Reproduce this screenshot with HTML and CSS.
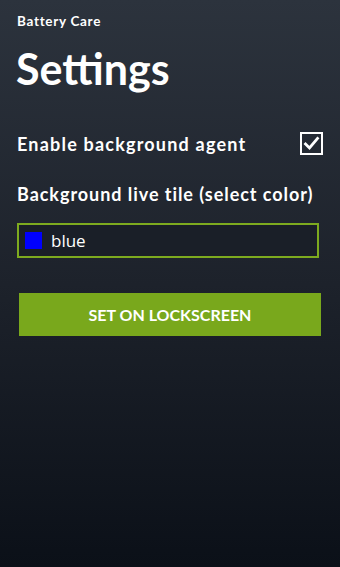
FILE: index.html
```html
<!DOCTYPE html>
<html>
<head>
<meta charset="utf-8">
<link rel="stylesheet" href="styles.css">
</head>
<body>
<div class="page">
  <div class="app-title">Battery Care</div>
  <h1 class="page-title">Settings</h1>
  <div class="row">
    <span class="label">Enable background agent</span>
    <span class="checkbox">
      <svg width="19" height="19" viewBox="0 0 19 19"><path d="M3.5 10 L7.5 14 L15.5 4.5" fill="none" stroke="#fff" stroke-width="2.8" stroke-linecap="square"/></svg>
    </span>
  </div>
  <div class="label label-color">Background live tile (select color)</div>
  <div class="picker">
    <span class="swatch"></span>
    <span class="picker-text">blue</span>
  </div>
  <button class="btn">SET ON LOCKSCREEN</button>
</div>
</body>
</html>
```
FILE: styles.css
```css
html, body {
  margin: 0;
  padding: 0;
  height: 100%;
}
body {
  background: linear-gradient(to bottom, #2c333d 0%, #1d222b 50%, #0b1018 100%);
  font-family: "Lato", "DejaVu Sans", sans-serif;
  color: #fff;
}
.page {
  padding: 12px 19px 0 17px;
  display: flex;
  flex-direction: column;
}
.app-title {
  font-size: 13.5px;
  font-weight: 700;
  line-height: 18px;
  letter-spacing: 0.7px;
}
.page-title {
  margin: 14px 0 0 -1px;
  font-size: 43px;
  font-weight: 700;
  line-height: 50px;
}
.row {
  margin-top: 38px;
  display: flex;
  align-items: center;
  justify-content: space-between;
}
.label {
  font-size: 18px;
  font-weight: 700;
  line-height: 22px;
  letter-spacing: 1.2px;
  white-space: nowrap;
}
.checkbox {
  width: 19px;
  height: 19px;
  border: 2px solid #fff;
  display: flex;
  align-items: center;
  justify-content: center;
  margin-right: -2px;
}
.label-color {
  margin-top: 28px;
  letter-spacing: 0.95px;
}
.picker {
  margin-top: 18px;
  margin-right: 2px;
  height: 31px;
  border: 2px solid #7daa1f;
  background: #1a1f28;
  display: flex;
  align-items: center;
  padding-left: 6px;
}
.swatch {
  width: 17px;
  height: 17px;
  background: #0000ff;
}
.picker-text {
  margin-left: 9px;
  font-family: "Open Sans", sans-serif;
  font-size: 17px;
  color: #fff;
}
.btn {
  margin: 35px 0 0 2px;
  height: 43px;
  border: none;
  background: #79a81c;
  color: #fff;
  font-family: "Lato", sans-serif;
  font-weight: 700;
  font-size: 16px;
}
```
